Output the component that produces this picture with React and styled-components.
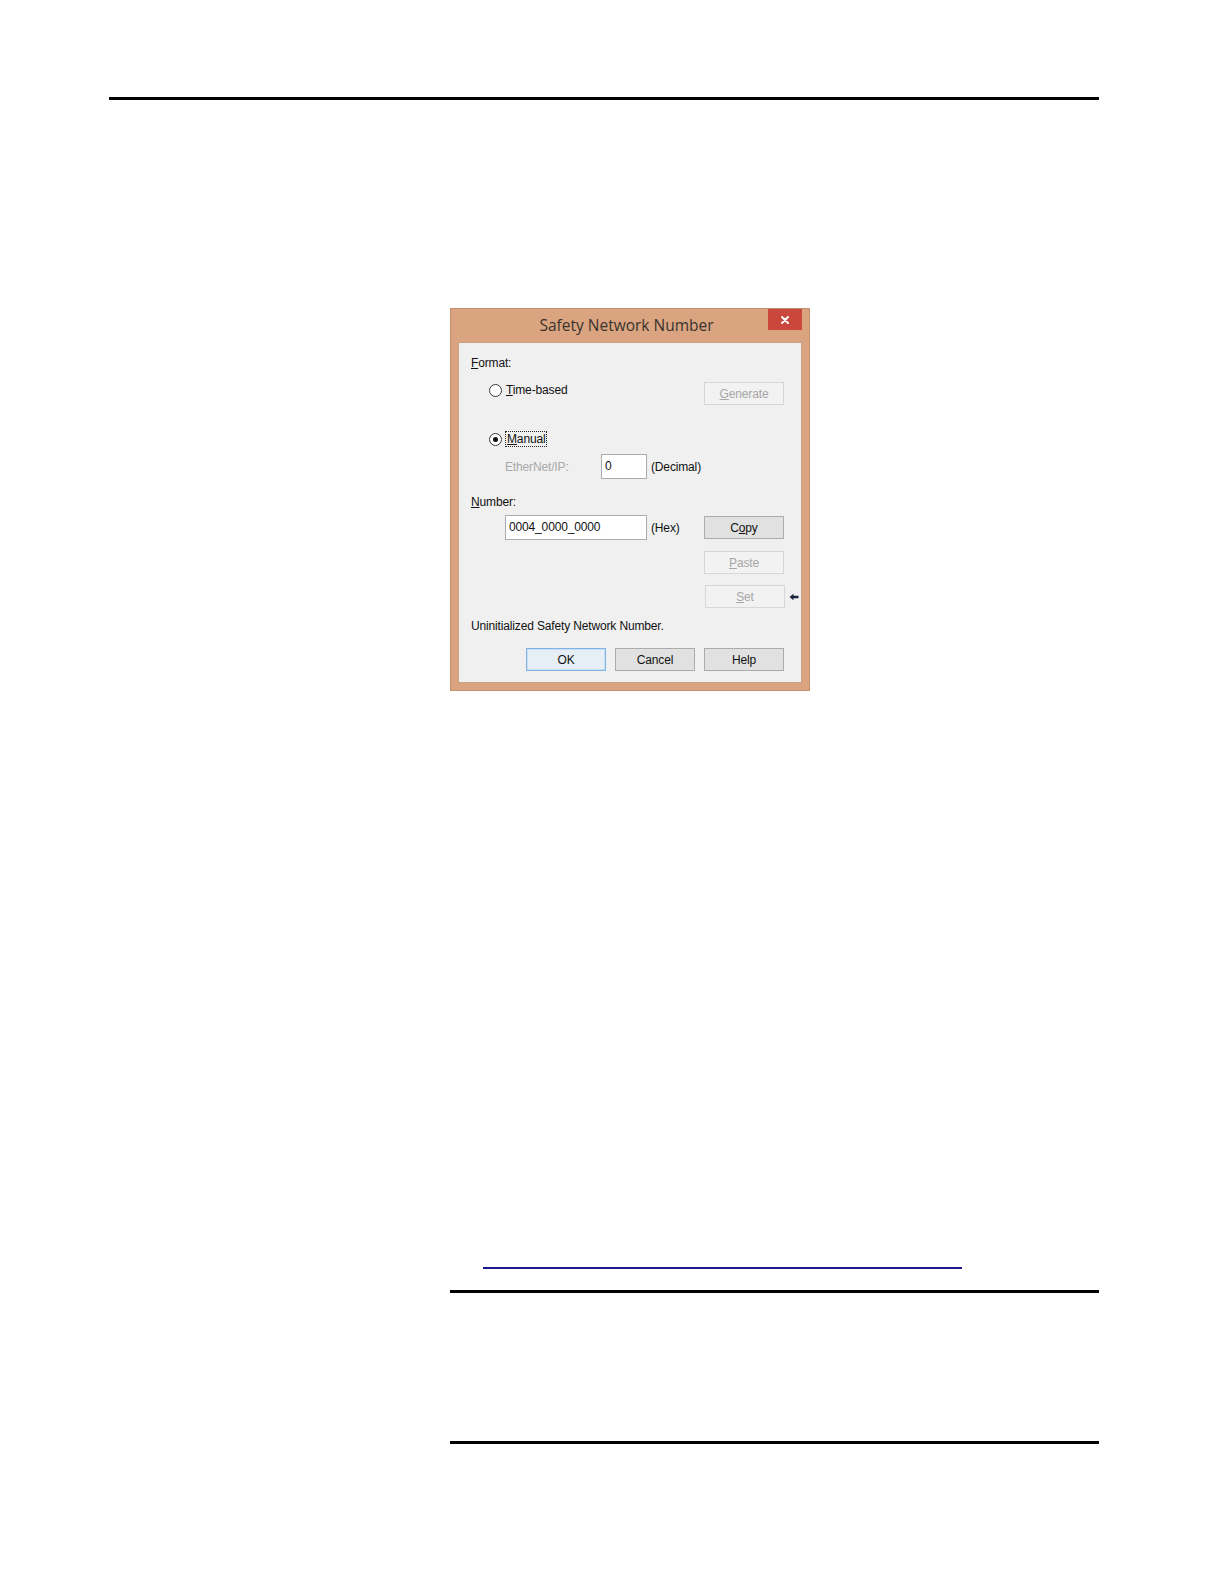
import styled, { createGlobalStyle } from "styled-components";

const GlobalStyle = createGlobalStyle`
    html, body {
        margin: 0;
        padding: 0;
        background: #ffffff;
    }
    body {
        font-family: "Liberation Sans", Arial, sans-serif;
    }
`;

const Page = styled.div`
    width: 1224px;
    height: 1584px;
    box-sizing: border-box;
    padding-top: 97px;
    display: flex;
    flex-direction: column;
`;

const Rule = styled.div`
    height: 3px;
    background: #000;
    margin-left: ${(p) => p.$left}px;
    margin-top: ${(p) => p.$top || 0}px;
    width: ${(p) => p.$width}px;
`;

const Dialog = styled.div`
    margin-top: ${(p) => p.$top}px;
    margin-left: 450px;
    width: 360px;
    box-sizing: border-box;
    background: #d9a47f;
    border: 1px solid #c4906c;
    display: flex;
    flex-direction: column;
    padding: 0 7px 7px;
`;

const TitleBar = styled.div`
    height: 33px;
    display: grid;
    grid-template-columns: 1fr auto 1fr;
    align-items: start;
    margin: 0 -7px;
    padding-right: 7px;
`;

const Title = styled.div`
    grid-column: 2;
    font-family: "Open Sans", "Liberation Sans", sans-serif;
    font-size: 15.5px;
    color: #3a3330;
    line-height: 33px;
    white-space: nowrap;
`;

const CloseBtn = styled.div`
    grid-column: 3;
    justify-self: end;
    width: 34px;
    height: 21px;
    background: #c9473d;
    display: flex;
    align-items: center;
    justify-content: center;
`;

const Client = styled.div`
    background: #f0f0f0;
    border: 1px solid #c9a184;
    box-sizing: border-box;
    height: 341px;
    padding: 13px 17px 0 12px;
    display: flex;
    flex-direction: column;
    font-size: 12px;
    letter-spacing: -0.15px;
    color: #111;
`;

const Row = styled.div`
    display: flex;
    align-items: ${(p) => p.$align || "center"};
    height: ${(p) => p.$h}px;
    margin-top: ${(p) => p.$mt || 0}px;
    margin-right: ${(p) => p.$mr || 0}px;
    justify-content: ${(p) => p.$justify || "flex-start"};
    gap: ${(p) => p.$gap || 0}px;
    flex-shrink: 0;
`;

const Label = styled.span`
    line-height: 14px;
    white-space: nowrap;
    color: ${(p) => (p.$disabled ? "#a9a9a9" : "#111")};
    margin-left: ${(p) => p.$ml || 0}px;
    width: ${(p) => (p.$w ? `${p.$w}px` : "auto")};
    flex-shrink: 0;
`;

const Key = styled.span`
    text-decoration: underline;
    text-underline-offset: 1px;
`;

const RadioWrap = styled.div`
    display: flex;
    align-items: center;
    gap: 4px;
    margin-left: 18px;
    margin-top: ${(p) => p.$mt || 0}px;
`;

const RadioCircle = styled.span`
    width: 13px;
    height: 13px;
    box-sizing: border-box;
    border-radius: 50%;
    border: 1px solid #3c3c3c;
    background: #fff;
    display: flex;
    align-items: center;
    justify-content: center;
    &::after {
        content: "";
        width: 5px;
        height: 5px;
        border-radius: 50%;
        background: ${(p) => (p.$checked ? "#111" : "transparent")};
    }
`;

const Focus = styled.span`
    outline: 1px dotted #222;
    outline-offset: 0;
    padding: 0 1px;
`;

const Button = styled.div`
    width: 80px;
    height: 23px;
    box-sizing: border-box;
    flex-shrink: 0;
    display: flex;
    align-items: center;
    justify-content: center;
    margin-left: ${(p) => (p.$right ? "auto" : "0")};
    border: 1px solid ${(p) => (p.$disabled ? "#d6d6d6" : p.$default ? "#7fb2e5" : "#acacac")};
    background: ${(p) => (p.$disabled ? "#f2f2f2" : p.$default ? "#e6eef6" : "#e1e1e1")};
    color: ${(p) => (p.$disabled ? "#a6a6a6" : "#111")};
    ${(p) => p.$default && "box-shadow: inset 0 0 0 1px #c9def2;"}
`;

const TextBox = styled.div`
    width: ${(p) => p.$w}px;
    height: 25px;
    box-sizing: border-box;
    margin-left: ${(p) => p.$ml || 0}px;
    background: #fff;
    border: 1px solid #acacac;
    padding: 4px 3px 0;
    line-height: 14px;
    flex-shrink: 0;
`;

const Arrow = styled.svg`
    width: 10px;
    height: 8px;
    margin-left: 4px;
    flex-shrink: 0;
`;

const LinkLine = styled.a`
    display: block;
    margin-top: ${(p) => p.$top}px;
    margin-left: 483px;
    width: 479px;
    height: 0;
    border-bottom: 2px solid #1b1b8f;
`;

const App = () => {
    return (
        <Page>
            <GlobalStyle />
            <Rule $left={109} $width={990} />

            <Dialog $top={208}>
                <TitleBar>
                    <Title>Safety Network Number</Title>
                    <CloseBtn>
                        <svg width="10" height="10" viewBox="0 0 10 10">
                            <path d="M2 2 L8 8 M8 2 L2 8" stroke="#fff" strokeWidth="2" strokeLinecap="round" />
                        </svg>
                    </CloseBtn>
                </TitleBar>

                <Client>
                    <Row $h={14}>
                        <Label><Key>F</Key>ormat:</Label>
                    </Row>

                    <Row $h={23} $mt={12} $align="flex-start">
                        <RadioWrap $mt={1}>
                            <RadioCircle />
                            <Label><Key>T</Key>ime-based</Label>
                        </RadioWrap>
                        <Button $right $disabled><Key>G</Key>enerate</Button>
                    </Row>

                    <Row $h={14} $mt={27}>
                        <RadioWrap>
                            <RadioCircle $checked />
                            <Label><Focus><Key>M</Key>anual</Focus></Label>
                        </RadioWrap>
                    </Row>

                    <Row $h={25} $mt={8}>
                        <Label $disabled $ml={34} $w={96}>EtherNet/IP:</Label>
                        <TextBox $w={46}>0</TextBox>
                        <Label $ml={4}>(Decimal)</Label>
                    </Row>

                    <Row $h={14} $mt={16}>
                        <Label><Key>N</Key>umber:</Label>
                    </Row>

                    <Row $h={25} $mt={6}>
                        <TextBox $w={142} $ml={34}>0004_0000_0000</TextBox>
                        <Label $ml={4}>(Hex)</Label>
                        <Button $right>C<Key>o</Key>py</Button>
                    </Row>

                    <Row $h={23} $mt={11}>
                        <Button $right $disabled><Key>P</Key>aste</Button>
                    </Row>

                    <Row $h={23} $mt={11} $mr={-15}>
                        <Button $right $disabled><Key>S</Key>et</Button>
                        <Arrow viewBox="0 0 10 8">
                            <path d="M0.5 4 L4.5 0.8 L4.5 2.8 L9.5 2.8 L9.5 5.2 L4.5 5.2 L4.5 7.2 Z" fill="#1c2340" />
                        </Arrow>
                    </Row>

                    <Row $h={14} $mt={11}>
                        <Label>Uninitialized Safety Network Number.</Label>
                    </Row>

                    <Row $h={23} $mt={15} $justify="flex-end" $gap={9}>
                        <Button $default>OK</Button>
                        <Button>Cancel</Button>
                        <Button>Help</Button>
                    </Row>
                </Client>
            </Dialog>

            <LinkLine $top={576} />
            <Rule $left={450} $width={649} $top={21} />
            <Rule $left={450} $width={649} $top={148} />
        </Page>
    );
};

export default App;
